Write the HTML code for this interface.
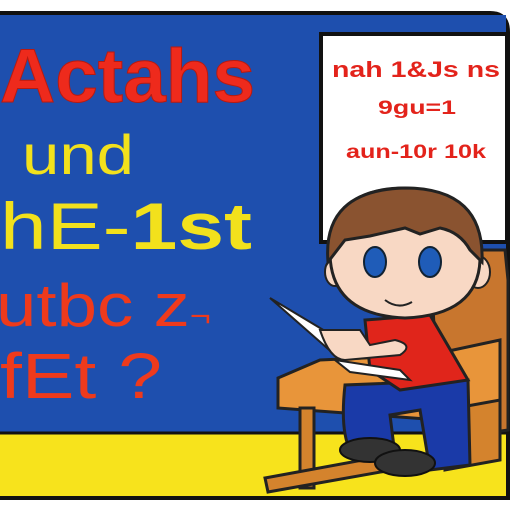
<html><body style="margin:0;background:#fff">
<svg width="512" height="512" viewBox="0 0 512 512" xmlns="http://www.w3.org/2000/svg" style="display:block">
<rect width="512" height="512" fill="#fff"/>
<path d="M-5 13 H490 Q508 13 508 32 V498 H-5 Z" fill="#f7e31c" stroke="#111" stroke-width="4"/>
<rect x="-5" y="15" width="511" height="417" fill="#1e4fae"/>
<line x1="-5" y1="433" x2="508" y2="433" stroke="#111" stroke-width="3"/>
<rect x="321" y="34" width="186" height="208" fill="#fff" stroke="#111" stroke-width="4"/>
<g font-family="Liberation Sans, sans-serif" font-weight="bold" fill="#e3231b" font-size="22">
<text x="332" y="77" textLength="168" lengthAdjust="spacingAndGlyphs">nah 1&amp;Js  ns</text>
<text x="378" y="114" font-size="19" textLength="78" lengthAdjust="spacingAndGlyphs">9gu=1</text>
<text x="346" y="158" font-size="19" textLength="140" lengthAdjust="spacingAndGlyphs">aun-10r 10k</text>
</g>
<g font-family="Liberation Sans, sans-serif">
<text x="0" y="102" font-size="76" font-weight="bold" fill="#ee2a1c" stroke="#b81a10" stroke-width="1" textLength="255" lengthAdjust="spacingAndGlyphs">Actahs</text>
<text x="22" y="174" font-size="56" fill="#f2e11c" textLength="112" lengthAdjust="spacingAndGlyphs">und</text>
<text x="0" y="249" font-size="66" fill="#f2e11c" textLength="252" lengthAdjust="spacingAndGlyphs">hE-<tspan font-weight="bold">1st</tspan></text>
<text x="-4" y="326" font-size="60" fill="#ee3a1c" textLength="215" lengthAdjust="spacingAndGlyphs">utbc  z<tspan font-size="30">¬</tspan></text>
<text x="0" y="398" font-size="64" fill="#ee3a1c" textLength="162" lengthAdjust="spacingAndGlyphs">fEt ?</text>
</g>
<path d="M430 250 L505 250 L508 280 L508 430 L440 440 Z" fill="#c8762e" stroke="#222" stroke-width="3"/>
<path d="M278 378 L320 360 L430 355 L500 340 L500 410 L440 420 L278 408 Z" fill="#e8953a" stroke="#222" stroke-width="3"/>
<path d="M445 410 L500 400 L500 460 L445 470 Z" fill="#d4832d" stroke="#222" stroke-width="3"/>
<rect x="300" y="408" width="14" height="80" fill="#d4832d" stroke="#222" stroke-width="3"/>
<path d="M265 478 L390 455 L392 470 L268 492 Z" fill="#d4832d" stroke="#222" stroke-width="3"/>
<path d="M345 385 Q340 430 350 450 L395 455 L390 415 L420 410 L430 470 L470 465 L468 380 Z" fill="#1a3aa8" stroke="#222" stroke-width="3"/>
<ellipse cx="370" cy="450" rx="30" ry="12" fill="#333" stroke="#111" stroke-width="2"/>
<ellipse cx="405" cy="463" rx="30" ry="13" fill="#333" stroke="#111" stroke-width="2"/>
<path d="M365 320 L430 315 L468 380 L400 390 L370 370 Z" fill="#e0251b" stroke="#222" stroke-width="3"/>
<path d="M270 298 L340 340 L335 355 Z" fill="#fff" stroke="#222" stroke-width="2"/>
<path d="M335 360 L400 370 L410 380 L350 372 Z" fill="#fff" stroke="#222" stroke-width="2"/>
<path d="M320 330 Q330 360 345 360 L400 355 Q415 345 395 340 L370 345 L360 330 Z" fill="#f8d8c4" stroke="#222" stroke-width="2"/>
<ellipse cx="478" cy="272" rx="12" ry="16" fill="#f8d8c4" stroke="#222" stroke-width="2"/>
<ellipse cx="335" cy="272" rx="10" ry="14" fill="#f8d8c4" stroke="#222" stroke-width="2"/>
<path d="M330 255 Q330 188 405 188 Q482 190 480 260 Q478 315 405 318 Q332 315 330 255 Z" fill="#f8d8c4" stroke="#222" stroke-width="3"/>
<path d="M328 262 Q322 190 405 188 Q485 188 482 262 L470 250 Q460 232 440 228 L420 234 L405 228 L370 236 L345 240 Z" fill="#8a5330" stroke="#222" stroke-width="3"/>
<ellipse cx="375" cy="262" rx="11" ry="15" fill="#1f5cb8" stroke="#123" stroke-width="2"/>
<ellipse cx="430" cy="262" rx="11" ry="15" fill="#1f5cb8" stroke="#123" stroke-width="2"/>
<path d="M385 300 Q398 310 412 302" fill="none" stroke="#222" stroke-width="2"/>
</svg>
</body></html>
